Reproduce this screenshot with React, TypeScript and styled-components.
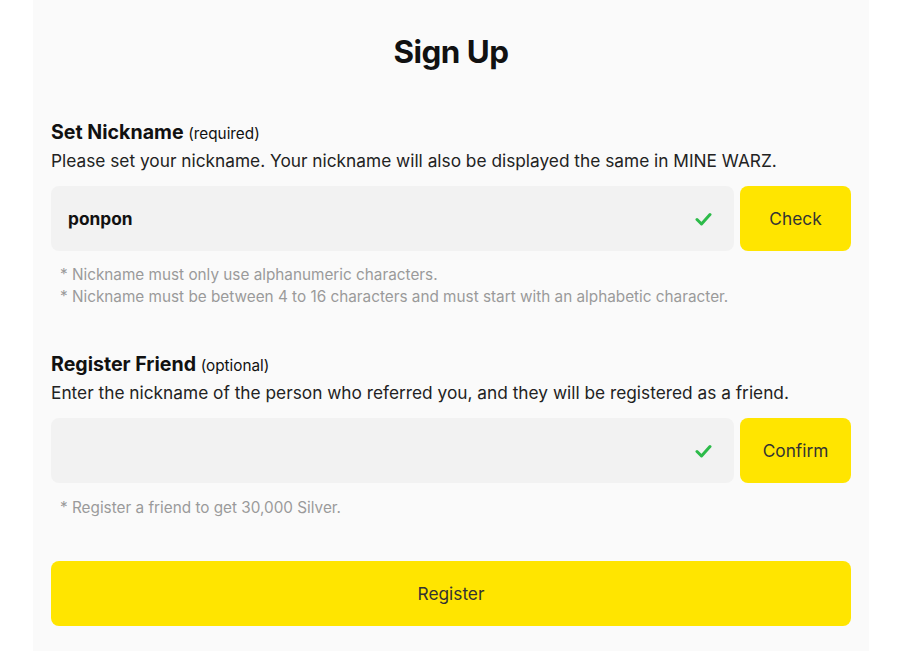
import styled, { createGlobalStyle } from "styled-components";

const GlobalStyle = createGlobalStyle`
  html, body {
    margin: 0;
    padding: 0;
    background: #ffffff;
    font-family: Inter, "Noto Sans", sans-serif;
    color: #111;
  }
`;

const Panel = styled.main`
  width: 836px;
  min-height: 651px;
  margin: 0 auto;
  transform: translateX(1px);
  background: #fafafa;
  padding: 0 18px;
  box-sizing: border-box;
  display: flex;
  flex-direction: column;
`;

const Title = styled.h1`
  margin: 34px 0 0;
  text-align: center;
  font-size: 31.4px;
  line-height: 36px;
  font-weight: 700;
  letter-spacing: -0.5px;
`;

const Section = styled.section<{ $top: number }>`
  margin-top: ${(p) => p.$top}px;
  display: flex;
  flex-direction: column;
`;

const Heading = styled.h2`
  margin: 0;
  font-size: 19.6px;
  line-height: 26px;
  font-weight: 700;
  small {
    font-size: 15.3px;
    font-weight: 400;
  }
`;

const Desc = styled.p`
  margin: 1px 0 0;
  font-size: 17.3px;
  line-height: 26px;
  color: #222;
`;

const Row = styled.div`
  margin-top: 12px;
  display: flex;
  gap: 6px;
  height: 65px;
`;

const Field = styled.div`
  flex: 1;
  display: flex;
  align-items: center;
  background: #f2f2f2;
  border-radius: 8px;
  padding: 0 22px 0 17px;
`;

const Input = styled.input`
  flex: 1;
  border: none;
  outline: none;
  background: transparent;
  font-family: inherit;
  font-size: 17.3px;
  font-weight: 700;
  color: #111;
  padding: 0;
`;

const Button = styled.button<{ $wide?: boolean }>`
  width: ${(p) => (p.$wide ? "100%" : "111px")};
  height: 65px;
  border: none;
  border-radius: 8px;
  background: #ffe500;
  font-family: inherit;
  font-size: 17.3px;
  color: #333;
  cursor: pointer;
`;

const Hints = styled.ul<{ $top: number }>`
  list-style: none;
  margin: ${(p) => p.$top}px 0 0;
  padding: 0 0 0 9px;
  li {
    font-size: 15.3px;
    line-height: 22px;
    color: #9a9a9a;
  }
`;

const Footer = styled.div`
  margin-top: 42px;
`;

const Check = () => (
  <svg width="17" height="14" viewBox="0 0 17 14">
    <path d="M2 7.5 L6.5 12 L15 2.5" fill="none" stroke="#2dbb4a" strokeWidth="3" strokeLinecap="round" strokeLinejoin="round" />
  </svg>
);

export default function App() {
  return (
    <>
      <GlobalStyle />
      <Panel>
        <Title>Sign Up</Title>
        <Section $top={49}>
          <Heading>
            Set Nickname <small>(required)</small>
          </Heading>
          <Desc>Please set your nickname. Your nickname will also be displayed the same in MINE WARZ.</Desc>
          <Row>
            <Field>
              <Input defaultValue="ponpon" />
              <Check />
            </Field>
            <Button>Check</Button>
          </Row>
          <Hints $top={13}>
            <li>* Nickname must only use alphanumeric characters.</li>
            <li>* Nickname must be between 4 to 16 characters and must start with an alphabetic character.</li>
          </Hints>
        </Section>
        <Section $top={43}>
          <Heading>
            Register Friend <small>(optional)</small>
          </Heading>
          <Desc>Enter the nickname of the person who referred you, and they will be registered as a friend.</Desc>
          <Row>
            <Field>
              <Input />
              <Check />
            </Field>
            <Button>Confirm</Button>
          </Row>
          <Hints $top={14}>
            <li>* Register a friend to get 30,000 Silver.</li>
          </Hints>
        </Section>
        <Footer>
          <Button $wide>Register</Button>
        </Footer>
      </Panel>
    </>
  );
}
